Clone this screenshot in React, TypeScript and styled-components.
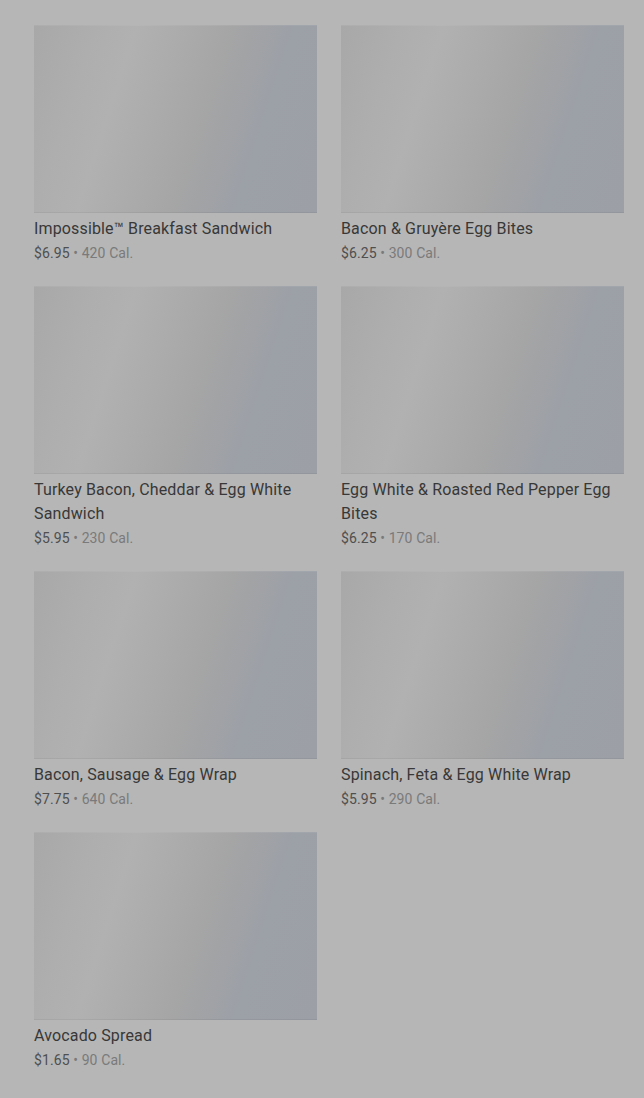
import React from "react";
import styled, { createGlobalStyle } from "styled-components";

const Global = createGlobalStyle`
  html, body { margin: 0; padding: 0; background: #b6b6b6; }
  body { font-family: Roboto, "Noto Sans", "Liberation Sans", sans-serif; }
`;

const Page = styled.main`
  background: #b6b6b6;
  min-height: 1098px;
  box-sizing: border-box;
  padding: 25px 20px 26px 34px;
`;

const Grid = styled.div`
  display: grid;
  grid-template-columns: 283px 283px;
  column-gap: 24px;
  row-gap: 21px;
`;

const Card = styled.article`
  display: flex;
  flex-direction: column;
`;

const Thumb = styled.div`
  height: 188px;
  background: linear-gradient(
    108deg,
    #a8a8a8 0%,
    #aeaeae 18%,
    #b1b1b1 30%,
    #acacac 42%,
    #a6a6a6 56%,
    #a2a3a5 64%,
    #9ca0a7 76%,
    #9c9fa6 100%
  );
  box-shadow: inset 0 -1px 0 rgba(0, 0, 0, 0.05), inset 0 1px 0 rgba(255, 255, 255, 0.06);
`;

const Title = styled.h3`
  margin: 4px 0 0;
  font-size: 16px;
  line-height: 24px;
  font-weight: 400;
  color: #383838;
  letter-spacing: 0.15px;
`;

const Meta = styled.p`
  margin: 0;
  font-size: 14px;
  line-height: 24px;
  color: #7a7a7a;
  letter-spacing: 0.1px;
`;

const Price = styled.span`
  color: #4f4f4f;
`;

const items = [
  { name: "Impossible™ Breakfast Sandwich", price: "$6.95", cal: "420 Cal." },
  { name: "Bacon & Gruyère Egg Bites", price: "$6.25", cal: "300 Cal." },
  { name: "Turkey Bacon, Cheddar & Egg White Sandwich", price: "$5.95", cal: "230 Cal." },
  { name: "Egg White & Roasted Red Pepper Egg Bites", price: "$6.25", cal: "170 Cal." },
  { name: "Bacon, Sausage & Egg Wrap", price: "$7.75", cal: "640 Cal." },
  { name: "Spinach, Feta & Egg White Wrap", price: "$5.95", cal: "290 Cal." },
  { name: "Avocado Spread", price: "$1.65", cal: "90 Cal." },
];

export default function App() {
  return (
    <>
      <Global />
      <Page>
        <Grid>
          {items.map((it) => (
            <Card key={it.name}>
              <Thumb />
              <Title>{it.name}</Title>
              <Meta>
                <Price>{it.price}</Price> • {it.cal}
              </Meta>
            </Card>
          ))}
        </Grid>
      </Page>
    </>
  );
}
